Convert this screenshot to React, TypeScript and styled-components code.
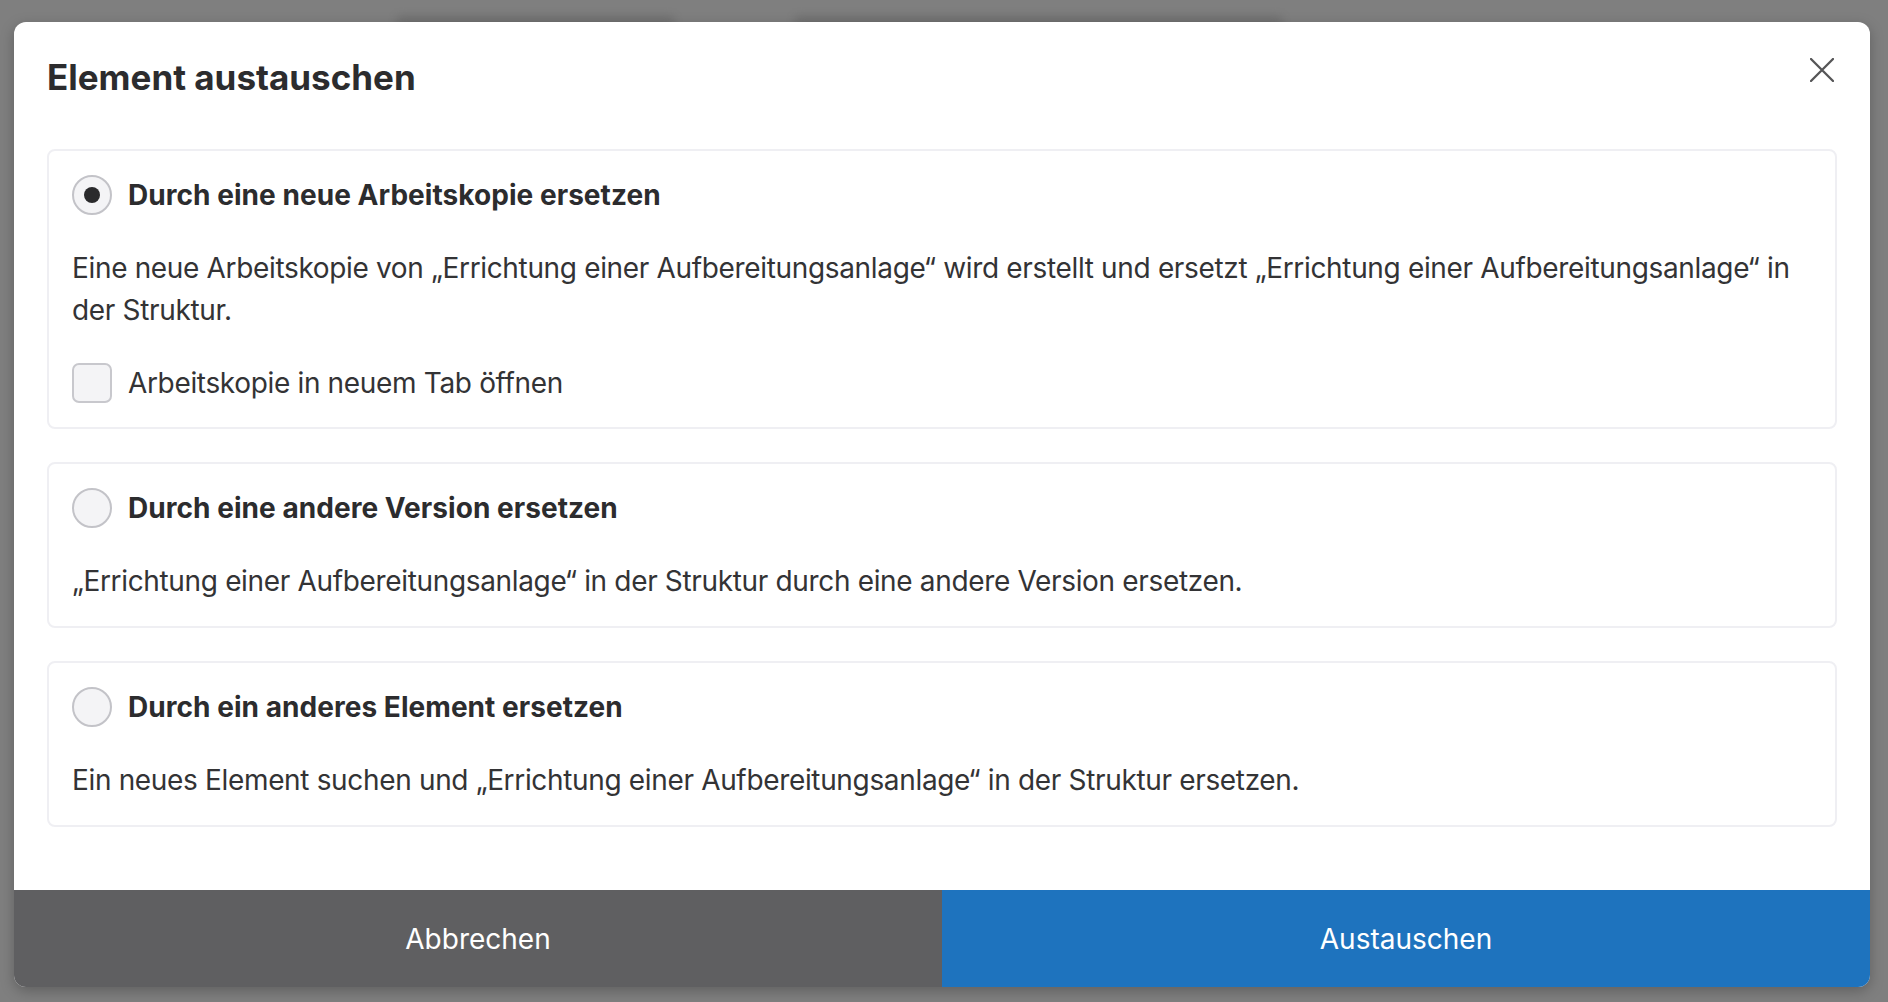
import React, { useState } from "react";
import styled, { createGlobalStyle } from "styled-components";

const Global = createGlobalStyle`
  html, body { margin: 0; padding: 0; }
  body {
    background: #7f7f7f;
    font-family: Inter, "Noto Sans", "Liberation Sans", sans-serif;
    color: #2e2e30;
  }
  * { box-sizing: border-box; }
`;

const Backdrop = styled.div`
  width: 1888px;
  height: 1002px;
  padding: 0 18px 0 14px;
  overflow: hidden;
  display: flex;
  flex-direction: column;
`;

const BehindStrip = styled.div`
  height: 22px;
  flex: none;
  display: flex;
  align-items: flex-end;
  padding-left: 383px;
  gap: 121px;
`;

const BehindBlur = styled.div<{ $w: number }>`
  width: ${(p) => p.$w}px;
  height: 12px;
  margin-bottom: -6px;
  background: #666;
  filter: blur(5px);
  opacity: 0.6;
`;

const Modal = styled.div`
  position: relative;
  width: 1856px;
  height: 965px;
  flex: none;
  background: #ffffff;
  border-radius: 12px;
  overflow: hidden;
  display: flex;
  flex-direction: column;
  box-shadow: 0 4px 14px rgba(0, 0, 0, 0.25);
`;

const Body = styled.div`
  flex: 1;
  padding: 33px 33px 0 33px;
  display: flex;
  flex-direction: column;
`;

const Header = styled.div`
  display: flex;
  justify-content: space-between;
  align-items: flex-start;
  margin-bottom: 50px;
`;

const Title = styled.h2`
  margin: 0;
  font-size: 35px;
  line-height: 44px;
  font-weight: 700;
  color: #2c2c2e;
  letter-spacing: 0px;
`;

const CloseButton = styled.button`
  width: 26px;
  height: 26px;
  margin: 2px 2px 0 0;
  padding: 0;
  border: none;
  background: transparent;
  display: flex;
  align-items: center;
  justify-content: center;
  cursor: pointer;
  color: #555557;
`;

const Options = styled.div`
  display: flex;
  flex-direction: column;
  gap: 33px;
`;

const Card = styled.div`
  border: 2px solid #efeff3;
  border-radius: 8px;
  padding: 24px 23px;
  display: flex;
  flex-direction: column;
  gap: 32px;
`;

const Row = styled.label`
  display: flex;
  align-items: center;
  gap: 16px;
  cursor: pointer;
`;

const Radio = styled.span<{ $checked: boolean }>`
  width: 40px;
  height: 40px;
  flex: none;
  border-radius: 50%;
  border: 2px solid #c3c3c8;
  background: #f4f4f6;
  display: flex;
  align-items: center;
  justify-content: center;
  &::after {
    content: "";
    width: 16px;
    height: 16px;
    border-radius: 50%;
    background: #2a2a2c;
    display: ${(p) => (p.$checked ? "block" : "none")};
  }
`;

const Checkbox = styled.span`
  width: 40px;
  height: 40px;
  flex: none;
  border-radius: 7px;
  border: 2px solid #c8c8cd;
  background: #f4f4f6;
`;

const OptionLabel = styled.span`
  font-size: 28px;
  line-height: 36px;
  font-weight: 700;
  letter-spacing: 0.05px;
  color: #2c2c2e;
`;

const Description = styled.p`
  margin: 0;
  font-size: 28px;
  line-height: 42px;
  font-weight: 400;
  letter-spacing: -0.34px;
  color: #333335;
`;

const CheckText = styled.span`
  font-size: 28px;
  line-height: 36px;
  font-weight: 400;
  letter-spacing: -0.34px;
  color: #333335;
`;

const Footer = styled.div`
  height: 97px;
  flex: none;
  display: grid;
  grid-template-columns: 1fr 1fr;
`;

const FooterButton = styled.button<{ $primary?: boolean }>`
  border: none;
  margin: 0;
  font-family: inherit;
  font-size: 28px;
  font-weight: 400;
  color: #ffffff;
  background: ${(p) => (p.$primary ? "#1e73be" : "#5f5f61")};
  cursor: pointer;
`;

const options = [
  {
    title: "Durch eine neue Arbeitskopie ersetzen",
    text: "Eine neue Arbeitskopie von „Errichtung einer Aufbereitungsanlage“ wird erstellt und ersetzt „Errichtung einer Aufbereitungsanlage“ in der Struktur.",
    extra: true,
  },
  {
    title: "Durch eine andere Version ersetzen",
    text: "„Errichtung einer Aufbereitungsanlage“ in der Struktur durch eine andere Version ersetzen.",
    extra: false,
  },
  {
    title: "Durch ein anderes Element ersetzen",
    text: "Ein neues Element suchen und „Errichtung einer Aufbereitungsanlage“ in der Struktur ersetzen.",
    extra: false,
  },
];

export default function App() {
  const [selected, setSelected] = useState(0);
  return (
    <>
      <Global />
      <Backdrop>
        <BehindStrip>
          <BehindBlur $w={277} />
          <BehindBlur $w={487} />
        </BehindStrip>
        <Modal>
          <Body>
            <Header>
              <Title>Element austauschen</Title>
              <CloseButton aria-label="Schließen">
                <svg width="24" height="24" viewBox="0 0 24 24" fill="none">
                  <path d="M1 1L23 23M23 1L1 23" stroke="currentColor" strokeWidth="2.3" strokeLinecap="round" />
                </svg>
              </CloseButton>
            </Header>
            <Options>
              {options.map((o, i) => (
                <Card key={i}>
                  <Row onClick={() => setSelected(i)}>
                    <Radio $checked={selected === i} />
                    <OptionLabel>{o.title}</OptionLabel>
                  </Row>
                  <Description>{o.text}</Description>
                  {o.extra && (
                    <Row>
                      <Checkbox />
                      <CheckText>Arbeitskopie in neuem Tab öffnen</CheckText>
                    </Row>
                  )}
                </Card>
              ))}
            </Options>
          </Body>
          <Footer>
            <FooterButton>Abbrechen</FooterButton>
            <FooterButton $primary>Austauschen</FooterButton>
          </Footer>
        </Modal>
      </Backdrop>
    </>
  );
}
